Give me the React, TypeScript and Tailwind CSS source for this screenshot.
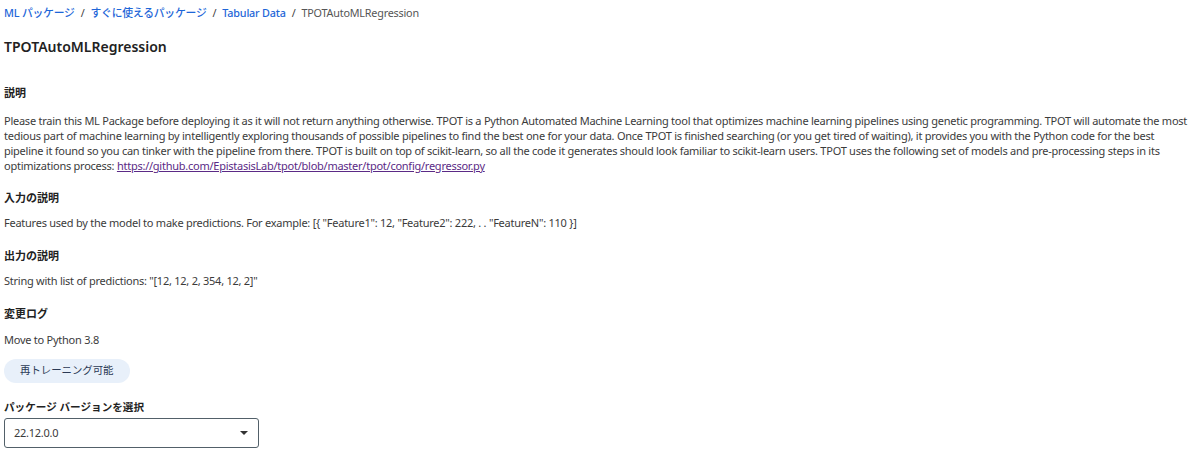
import React from "react";

export default function App() {
  const font = { fontFamily: '"Noto Sans", "Noto Sans CJK JP", sans-serif' };
  return (
    <div className="w-[1199px] h-[460px] bg-white px-[4px] text-[#3b3b3b]" style={font}>
      <nav className="flex items-center h-[25px] pt-[1px] text-[10.8px] tracking-[-0.2px] gap-[6px]">
        <a className="text-[#1e66d8] font-medium">ML パッケージ</a>
        <span className="text-[#3b3b3b]">/</span>
        <a className="text-[#1e66d8] font-medium">すぐに使えるパッケージ</a>
        <span className="text-[#3b3b3b]">/</span>
        <a className="text-[#1e66d8] font-medium">Tabular Data</a>
        <span className="text-[#3b3b3b]">/</span>
        <span className="text-[#555]">TPOTAutoMLRegression</span>
      </nav>
      <h1 className="mt-[12px] text-[14px] font-semibold text-[#222] leading-[20px]">TPOTAutoMLRegression</h1>
      <h2 className="mt-[29px] text-[11px] font-bold text-[#222] leading-[14px]">説明</h2>
      <p className="mt-[13px] text-[11px] tracking-[-0.25px] leading-[15px] text-[#3b3b3b]">
        Please train this ML Package before deploying it as it will not return anything otherwise. TPOT is a Python Automated Machine Learning tool that optimizes machine learning pipelines using genetic programming. TPOT will automate the most<br />tedious part of machine learning by intelligently exploring thousands of possible pipelines to find the best one for your data. Once TPOT is finished searching (or you get tired of waiting), it provides you with the Python code for the best<br />pipeline it found so you can tinker with the pipeline from there. TPOT is built on top of scikit-learn, so all the code it generates should look familiar to scikit-learn users. TPOT uses the following set of models and pre-processing steps in its<br />optimizations process:{" "}
        <a className="underline text-[#5b2a86]">https://github.com/EpistasisLab/tpot/blob/master/tpot/config/regressor.py</a>
      </p>
      <h2 className="mt-[18px] text-[11px] font-bold text-[#222] leading-[14px]">入力の説明</h2>
      <p className="mt-[10px] text-[11px] tracking-[-0.25px] leading-[15px]">Features used by the model to make predictions. For example: [{"{"} "Feature1": 12, "Feature2": 222, . . "FeatureN": 110 {"}"}]</p>
      <h2 className="mt-[19px] text-[11px] font-bold text-[#222] leading-[14px]">出力の説明</h2>
      <p className="mt-[10px] text-[11px] tracking-[-0.25px] leading-[15px]">String with list of predictions: "[12, 12, 2, 354, 12, 2]"</p>
      <h2 className="mt-[19px] text-[11px] font-bold text-[#222] leading-[14px]">変更ログ</h2>
      <p className="mt-[11px] text-[11px] tracking-[-0.25px] leading-[15px]">Move to Python 3.8</p>
      <div className="mt-[12px] inline-flex items-center h-[24px] px-[16px] rounded-full bg-[#e8f0fa] text-[10.4px] text-[#2b3a55]">再トレーニング可能</div>
      <div className="mt-[16px] text-[10.6px] font-bold text-[#222] leading-[16px]">パッケージ バージョンを選択</div>
      <div className="mt-[3px] w-[255px] h-[30px] border border-[#526069] rounded-[3px] flex items-center justify-between pl-[9px] pr-[10px]">
        <span className="text-[11px] tracking-[-0.25px] text-[#3b3b3b]">22.12.0.0</span>
        <svg width="8" height="4" viewBox="0 0 8 4"><path d="M0 0h8L4 4z" fill="#333" /></svg>
      </div>
    </div>
  );
}
